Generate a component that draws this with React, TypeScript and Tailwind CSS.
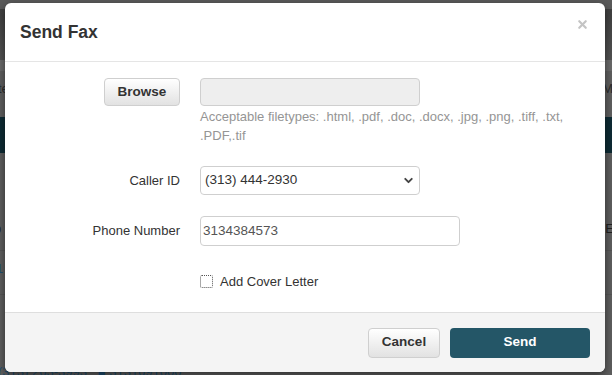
import { ChevronDown, X } from "lucide-react";

const font = { fontFamily: '"Liberation Sans", Arial, sans-serif' };

export default function App() {
  return (
    <div className="relative w-[612px] h-[375px] overflow-hidden bg-[#5c5c5c]" style={font}>
      {/* Page behind the dimmed overlay */}
      <div className="flex flex-col h-full">
        <div className="h-[9px] bg-[#5a5a5a]" />
        <div className="h-[52px] bg-gradient-to-b from-[#404040] to-[#525252] border-b border-[#6a6a6a]" />
        <div className="h-[10px] bg-[#6a6a6a]" />
        <div className="h-[46px] bg-[#5f5f5f] flex items-start justify-between text-[13px] text-[#2c2c2c] pt-[8px]">
          <span className="-ml-[2px]">te</span>
          <span className="-mr-[4px]">Mi</span>
        </div>
        <div className="h-[36px] bg-[#0e2b34]" />
        <div className="h-[98px] bg-[#5e5e5e] flex items-end justify-between text-[13px] text-[#222] pb-[12px] border-b border-[#555]">
          <span className="-ml-[6px]">b</span>
          <span className="-mr-[2px]">E</span>
        </div>
        <div className="h-[44px] bg-[#5e5e5e] border-b border-[#555] text-[13px] text-[#1f4e70] pt-[8px]">
          <span className="-ml-[4px]">1</span>
        </div>
        <div className="flex-1 bg-[#5e5e5e] text-[13px] text-[#1f4e70] flex items-end whitespace-nowrap">
          <span className="-ml-[2px] -mb-[6px]">(313) 263-3993 &nbsp; ■ 3131691000</span>
        </div>
      </div>

      {/* Modal */}
      <div className="absolute left-[5px] top-[3px] w-[600px] h-[369px] bg-white rounded-[6px] flex flex-col overflow-hidden shadow-[0_3px_9px_rgba(0,0,0,0.5)]">
        <div className="h-[59px] shrink-0 border-b border-[#e5e5e5] flex items-center justify-between pl-[15px] pr-[16px]">
          <h4 className="text-[17.5px] font-bold text-[#333]">Send Fax</h4>
          <X className="w-[13px] h-[13px] text-[#c4c4c4] -mt-[16px]" strokeWidth={4} />
        </div>

        <div className="flex-1 pt-[16px] text-[13px] text-[#333]">
          <div className="flex">
            <div className="w-[175px] flex justify-end">
              <button className="w-[76px] h-[28px] rounded-[4px] border border-[#cfcfcf] bg-gradient-to-b from-white to-[#e2e2e2] text-[13.5px] font-bold text-[#333]">
                Browse
              </button>
            </div>
            <div className="ml-5 w-[375px]">
              <div className="w-[220px] h-[28px] rounded-[4px] border border-[#cfcfcf] bg-[#eeeeee]" />
              <p className="mt-[1px] text-[13px] leading-[19px] text-[#959595]">
                Acceptable filetypes: .html, .pdf, .doc, .docx, .jpg, .png, .tiff, .txt, .PDF,.tif
              </p>
            </div>
          </div>

          <div className="flex items-center mt-[21px]">
            <div className="w-[175px] text-right">Caller ID</div>
            <div className="ml-5 w-[220px] h-[29px] rounded-[4px] border border-[#cfcfcf] bg-white flex items-center justify-between pl-[4px] pr-[4px] text-[13.5px] text-[#333]">
              <span>(313) 444-2930</span>
              <ChevronDown className="w-[13px] h-[13px] text-[#444]" strokeWidth={3.5} />
            </div>
          </div>

          <div className="flex items-center mt-[21px]">
            <div className="w-[175px] text-right">Phone Number</div>
            <div className="ml-5 w-[260px] h-[30px] rounded-[4px] border border-[#cfcfcf] bg-white flex items-center pl-[2px] text-[13.5px] text-[#555]">
              3134384573
            </div>
          </div>

          <div className="flex items-center mt-[26px]">
            <div className="w-[175px]" />
            <div className="ml-5 flex items-center gap-[7px]">
              <span className="w-[13px] h-[13px] rounded-[2px] border border-dotted border-[#555] bg-white" />
              <span>Add Cover Letter</span>
            </div>
          </div>
        </div>

        <div className="h-[60px] shrink-0 border-t border-[#dedede] bg-[#f4f4f4] flex items-center justify-end gap-[10px] pr-[15px]">
          <button className="w-[72px] h-[30px] rounded-[4px] border border-[#cfcfcf] bg-gradient-to-b from-white to-[#e2e2e2] text-[13.5px] font-bold text-[#333]">
            Cancel
          </button>
          <button className="w-[140px] h-[30px] rounded-[4px] bg-[#245667] text-[13.5px] font-bold text-white">
            Send
          </button>
        </div>
      </div>
    </div>
  );
}
